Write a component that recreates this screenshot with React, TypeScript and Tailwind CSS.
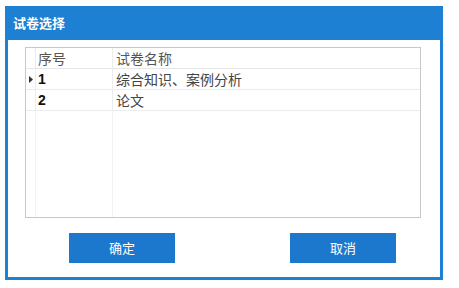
const rows = [
  { no: "1", name: "综合知识、案例分析", current: true },
  { no: "2", name: "论文", current: false },
];

export default function App() {
  return (
    <div className="w-[459px] h-[288px] bg-white pl-[5px] pt-[6px] font-['Noto_Sans_CJK_SC',sans-serif]">
      <div className="w-[438px] h-[274px] bg-[#1e80d2] flex flex-col">
        <div className="h-[34px] flex items-center pl-[8px] text-white text-[13px] font-bold">试卷选择</div>
        <div className="flex-1 bg-white mx-[3px] mb-[3px] pl-[17px] pt-[7px]">
          <div className="w-[396px] h-[171px] border border-[#c8c8c8] flex flex-col text-[14px] text-[#444]">
            <div className="flex h-[21px] border-b border-[#e6e6e6] text-[#555]">
              <div className="w-[10px] border-r border-[#ececec]" />
              <div className="w-[77px] border-r border-[#ececec] pl-[2px] leading-[20px]">序号</div>
              <div className="flex-1 pl-[3px] leading-[20px]">试卷名称</div>
            </div>
            {rows.map((r) => (
              <div key={r.no} className="flex h-[21px] border-b border-[#ececec]">
                <div className="w-[10px] border-r border-[#ececec] flex items-center justify-center">
                  {r.current && (
                    <svg width="4" height="7" viewBox="0 0 4 7">
                      <path d="M0 0 L4 3.5 L0 7 Z" fill="#333" />
                    </svg>
                  )}
                </div>
                <div className="w-[77px] border-r border-[#ececec] pl-[2px] leading-[20px] font-bold text-[#111] font-['Liberation_Sans',sans-serif] text-[14px]">
                  {r.no}
                </div>
                <div className="flex-1 pl-[3px] leading-[20px]">{r.name}</div>
              </div>
            ))}
            <div className="flex flex-1">
              <div className="w-[10px] border-r border-[#f2f2f2]" />
              <div className="w-[77px] border-r border-[#f2f2f2]" />
              <div className="flex-1" />
            </div>
          </div>
          <div className="flex mt-[15px]">
            <button className="ml-[44px] w-[106px] h-[30px] bg-[#1c78cc] text-white text-[13px]">确定</button>
            <button className="ml-[115px] w-[106px] h-[30px] bg-[#1c78cc] text-white text-[13px]">取消</button>
          </div>
        </div>
      </div>
    </div>
  );
}
